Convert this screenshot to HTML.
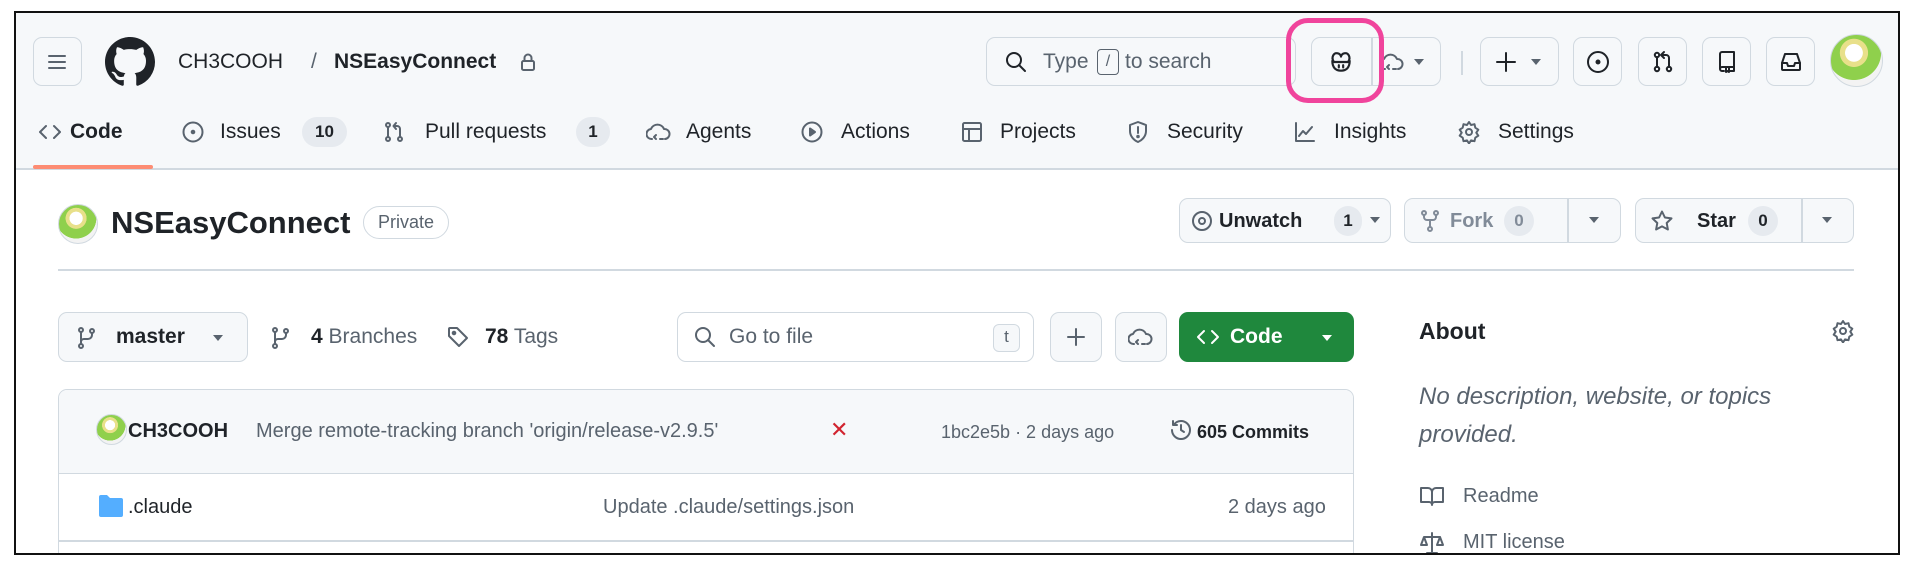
<!DOCTYPE html>
<html><head><meta charset="utf-8"><style>
*{box-sizing:border-box;margin:0;padding:0}
body{width:1918px;height:568px;background:#fff;font-family:"Liberation Sans",sans-serif;color:#1f2328;position:relative;overflow:hidden}
.frame{position:absolute;left:14px;top:11px;width:1886px;height:544px;border:2px solid #111;overflow:hidden;background:#fff}
.a{position:absolute}
.hdr{left:0;top:0;width:100%;height:157px;background:#f6f8fa;border-bottom:2px solid #d1d9e0}
.btn{position:absolute;border:1.5px solid #d1d9e0;border-radius:9px;background:#f6f8fa}
.t{position:absolute;font-size:21px;line-height:24px;white-space:nowrap}
svg{position:absolute;fill:none;stroke:#59636e;stroke-width:2;stroke-linecap:round;stroke-linejoin:round}
.cnt{position:absolute;background:#e6eaef;border-radius:16px;font-size:17px;line-height:30px;text-align:center;font-weight:bold}
.g{color:#59636e}
.av{background:radial-gradient(circle at 45% 35%,#fff 0 20%,#e8e08a 21% 32%,#8fd04c 33% 62%,#f3f3f3 63%)}
</style></head><body>
<div class="frame">
<div class="a hdr"></div>
<div class="btn" style="left:17px;top:24px;width:49px;height:49px"></div>
<svg style="left:30px;top:38px" width="22" height="22" viewBox="0 0 22 22"><path d="M3 5h16M3 11h16M3 17h16"/></svg>
<svg style="left:89px;top:24px;stroke:none;fill:#1f2328" width="50" height="50" viewBox="0 0 16 16"><path d="M8 0C3.58 0 0 3.58 0 8c0 3.54 2.29 6.530 5.47 7.59.4.07.55-.17.55-.38 0-.19-.01-.82-.01-1.49-2.01.37-2.53-.49-2.69-.94-.09-.23-.48-.94-.82-1.130-.28-.15-.68-.52-.01-.53.63-.01 1.08.58 1.23.82.72 1.21 1.87.87 2.33.66.07-.52.28-.87.51-1.07-1.78-.2-3.64-.89-3.64-3.95 0-.87.31-1.59.82-2.15-.08-.2-.36-1.02.08-2.12 0 0 .67-.21 2.2.82.64-.18 1.32-.27 2-.27.68 0 1.36.09 2 .27 1.53-1.04 2.2-.82 2.2-.82.44 1.1.16 1.92.08 2.12.51.56.82 1.27.82 2.15 0 3.07-1.87 3.75-3.65 3.95.29.25.54.73.54 1.48 0 1.07-.01 1.93-.01 2.2 0 .21.15.46.55.38A8.013 8.013 0 0016 8c0-4.42-3.58-8-8-8z"/></svg>
<div class="t" style="left:162px;top:37px">CH3COOH</div>
<div class="t g" style="left:295px;top:37px">/</div>
<div class="t" style="left:318px;top:37px;font-weight:bold">NSEasyConnect</div>
<svg style="left:503px;top:39px" width="18" height="20" viewBox="0 0 18 20"><rect x="3" y="9" width="12" height="9" rx="1.5"/><path d="M5.5 9V6a3.5 3.5 0 017 0v3"/></svg>
<div class="btn" style="left:970px;top:24px;width:310px;height:49px;background:#f6f8fa"></div>
<svg style="left:988px;top:37px;stroke:#1f2328" width="24" height="24" viewBox="0 0 24 24"><circle cx="10" cy="10" r="7"/><path d="M15 15l6 6"/></svg>
<div class="t g" style="left:1027px;top:37px">Type</div>
<div class="a" style="left:1081px;top:36px;width:22px;height:26px;border:1.5px solid #59636e;border-radius:4px;font-size:16px;text-align:center;line-height:23px;color:#59636e">/</div>
<div class="t g" style="left:1109px;top:37px">to search</div>
<div class="btn" style="left:1295px;top:24px;width:130px;height:49px"></div>
<div class="a" style="left:1355px;top:25px;width:1.5px;height:47px;background:#d1d9e0"></div>
<svg style="left:1312px;top:36px;stroke:#1f2328" width="26" height="26" viewBox="0 0 24 24"><path d="M5 11c-2-3 0-8 4-7 2 .5 3 2 3 3 0-1 1-2.5 3-3 4-1 6 4 4 7"/><path d="M4 11c0 6 3 9 8 9s8-3 8-9"/><path d="M5 12h14M10 15v2M14 15v2"/></svg>
<svg style="left:1363px;top:37px" width="26" height="24" viewBox="0 0 26 24"><path d="M6 19a5 5 0 01-1-10 7 7 0 0113 0 5 5 0 01 1 10"/><path d="M10 15l-2 2 2 2M14 19h3"/></svg>
<svg style="left:1397px;top:45px;stroke:none;fill:#59636e" width="12" height="8"><path d="M1 1h10L6 7z"/></svg>
<div class="a" style="left:1270px;top:5px;width:98px;height:85px;border:5px solid #f0449c;border-radius:22px"></div>
<div class="a" style="left:1445px;top:38px;width:1.5px;height:24px;background:#d1d9e0"></div>
<div class="btn" style="left:1464px;top:24px;width:79px;height:49px"></div>
<svg style="left:1478px;top:37px;stroke:#1f2328" width="24" height="24" viewBox="0 0 24 24"><path d="M12 3v18M3 12h18"/></svg>
<svg style="left:1514px;top:45px;stroke:none;fill:#59636e" width="12" height="8"><path d="M1 1h10L6 7z"/></svg>
<div class="btn" style="left:1557px;top:24px;width:49px;height:49px"></div>
<svg style="left:1569px;top:36px;stroke:#1f2328" width="26" height="26" viewBox="0 0 26 26"><circle cx="13" cy="13" r="10"/><circle cx="13" cy="13" r="1.5" fill="#1f2328"/></svg>
<div class="btn" style="left:1622px;top:24px;width:49px;height:49px"></div>
<svg style="left:1634px;top:36px;stroke:#1f2328" width="26" height="26" viewBox="0 0 26 26"><circle cx="7" cy="6" r="2.2"/><circle cx="7" cy="20" r="2.2"/><circle cx="19" cy="20" r="2.2"/><path d="M7 8v10M19 18V9a3 3 0 00-3-3h-4M14 3l-3 3 3 3"/></svg>
<div class="btn" style="left:1686px;top:24px;width:49px;height:49px"></div>
<svg style="left:1698px;top:36px;stroke:#1f2328" width="26" height="26" viewBox="0 0 26 26"><path d="M6 20V5a2 2 0 012-2h12v15H8a2 2 0 00-2 2 2 2 0 002 2h2M20 18v4h-4M12 19v4l1.5-1 1.5 1v-4"/></svg>
<div class="btn" style="left:1750px;top:24px;width:49px;height:49px"></div>
<svg style="left:1762px;top:36px;stroke:#1f2328" width="26" height="26" viewBox="0 0 26 26"><path d="M4 14l3-9h12l3 9v6a1 1 0 01-1 1H5a1 1 0 01-1-1z"/><path d="M4 14h5l1 3h6l1-3h5"/></svg>
<div class="a av" style="left:1814px;top:21px;width:53px;height:53px;border-radius:50%;border:1px solid #d1d9e0"></div>
<svg style="left:22px;top:107px" width="24" height="24" viewBox="0 0 24 24"><path d="M8 6l-6 6 6 6M16 6l6 6-6 6"/></svg>
<div class="t" style="left:54px;top:107px;font-weight:bold">Code</div>
<div class="a" style="left:17px;top:152px;width:120px;height:4px;background:#fd8c73;border-radius:2px"></div>
<svg style="left:165px;top:107px" width="24" height="24" viewBox="0 0 24 24"><circle cx="12" cy="12" r="9.5"/><circle cx="12" cy="12" r="1.3" fill="#59636e"/></svg>
<div class="t" style="left:204px;top:107px">Issues</div>
<div class="cnt" style="left:286px;top:104px;width:45px">10</div>
<svg style="left:366px;top:107px" width="24" height="24" viewBox="0 0 24 24"><circle cx="6" cy="5" r="2"/><circle cx="6" cy="19" r="2"/><circle cx="18" cy="19" r="2"/><path d="M6 7v10M18 17V9a3 3 0 00-3-3h-3M14 3l-2.5 3 2.5 3"/></svg>
<div class="t" style="left:409px;top:107px">Pull requests</div>
<div class="cnt" style="left:560px;top:104px;width:34px">1</div>
<svg style="left:630px;top:107px" width="26" height="24" viewBox="0 0 26 24"><path d="M6 19a5 5 0 01-1-10 7 7 0 0113 0 5 5 0 01 1 10"/><path d="M10 15l-2 2 2 2M14 19h3"/></svg>
<div class="t" style="left:670px;top:107px">Agents</div>
<svg style="left:784px;top:107px" width="24" height="24" viewBox="0 0 24 24"><circle cx="12" cy="12" r="9.5"/><path d="M10 8.5v7l5-3.5z" fill="#59636e"/></svg>
<div class="t" style="left:825px;top:107px">Actions</div>
<svg style="left:944px;top:107px" width="24" height="24" viewBox="0 0 24 24"><rect x="3" y="3" width="18" height="18" rx="1.5"/><path d="M3 9h18M9 9v12"/></svg>
<div class="t" style="left:984px;top:107px">Projects</div>
<svg style="left:1110px;top:107px" width="24" height="24" viewBox="0 0 24 24"><path d="M12 2l8 3v6c0 5-3.5 9-8 11-4.5-2-8-6-8-11V5z"/><path d="M12 7v6"/><circle cx="12" cy="16.5" r=".8" fill="#59636e"/></svg>
<div class="t" style="left:1151px;top:107px">Security</div>
<svg style="left:1277px;top:107px" width="24" height="24" viewBox="0 0 24 24"><path d="M3 3v18h18M6 16l4-5 3 3 6-7"/></svg>
<div class="t" style="left:1318px;top:107px">Insights</div>
<svg style="left:1441px;top:107px" width="24" height="24" viewBox="0 0 24 24"><circle cx="12" cy="12" r="3"/><path d="M12 2l2 3 3.5-.8.8 3.5 3 2-2 3 2 3-3 2-.8 3.5-3.5-.8-2 3-2-3-3.5.8-.8-3.5-3-2 2-3-2-3 3-2 .8-3.5 3.5.8z"/></svg>
<div class="t" style="left:1482px;top:107px">Settings</div>

<div class="a av" style="left:42px;top:191px;width:40px;height:40px;border-radius:50%;border:1px solid #d1d9e0"></div>
<div class="t" style="left:95px;top:193px;font-size:31px;line-height:34px;font-weight:bold">NSEasyConnect</div>
<div class="a" style="left:347px;top:193px;width:86px;height:33px;border:1.5px solid #d1d9e0;border-radius:17px;font-size:18px;line-height:30px;text-align:center;color:#59636e">Private</div>
<div class="btn" style="left:1163px;top:185px;width:212px;height:45px"></div>
<svg style="left:1175px;top:197px" width="22" height="22" viewBox="0 0 22 22"><circle cx="11" cy="11" r="9"/><circle cx="11" cy="11" r="3"/></svg>
<div class="t" style="left:1203px;top:196px;font-weight:bold;font-size:20px">Unwatch</div>
<div class="cnt" style="left:1318px;top:193px;width:28px">1</div>
<svg style="left:1353px;top:203px;stroke:none;fill:#59636e" width="12" height="8"><path d="M1 1h10L6 7z"/></svg>
<div class="btn" style="left:1388px;top:185px;width:217px;height:45px"></div>
<div class="a" style="left:1551px;top:186px;width:1.5px;height:43px;background:#d1d9e0"></div>
<svg style="left:1403px;top:196px;stroke:#818b98" width="22" height="24" viewBox="0 0 22 24"><circle cx="5" cy="4" r="2"/><circle cx="17" cy="4" r="2"/><circle cx="11" cy="20" r="2"/><path d="M5 6v2a3 3 0 003 3h6a3 3 0 003-3V6M11 11v7"/></svg>
<div class="t" style="left:1434px;top:196px;font-weight:bold;font-size:20px;color:#818b98">Fork</div>
<div class="cnt" style="left:1488px;top:193px;width:30px;color:#818b98">0</div>
<svg style="left:1572px;top:203px;stroke:none;fill:#59636e" width="12" height="8"><path d="M1 1h10L6 7z"/></svg>
<div class="btn" style="left:1619px;top:185px;width:219px;height:45px"></div>
<div class="a" style="left:1785px;top:186px;width:1.5px;height:43px;background:#d1d9e0"></div>
<svg style="left:1634px;top:196px" width="24" height="24" viewBox="0 0 24 24"><path d="M12 2.5l2.9 6 6.6.9-4.8 4.6 1.2 6.5L12 17.4l-5.9 3.1 1.2-6.5-4.8-4.6 6.6-.9z"/></svg>
<div class="t" style="left:1681px;top:196px;font-weight:bold;font-size:20px">Star</div>
<div class="cnt" style="left:1732px;top:193px;width:30px">0</div>
<svg style="left:1805px;top:203px;stroke:none;fill:#59636e" width="12" height="8"><path d="M1 1h10L6 7z"/></svg>
<div class="a" style="left:42px;top:256px;width:1796px;height:2px;background:#d1d9e0"></div>

<div class="btn" style="left:42px;top:299px;width:190px;height:50px"></div>
<svg style="left:61px;top:313px" width="20" height="24" viewBox="0 0 20 24"><circle cx="4" cy="4" r="2"/><circle cx="4" cy="20" r="2"/><circle cx="15" cy="5" r="2"/><path d="M4 6v12M15 7v2a4 4 0 01-4 4H7a3 3 0 00-3 3"/></svg>
<div class="t" style="left:100px;top:312px;font-weight:bold">master</div>
<svg style="left:196px;top:321px;stroke:none;fill:#59636e" width="12" height="8"><path d="M1 1h10L6 7z"/></svg>
<svg style="left:255px;top:313px" width="20" height="24" viewBox="0 0 20 24"><circle cx="4" cy="4" r="2"/><circle cx="4" cy="20" r="2"/><circle cx="15" cy="5" r="2"/><path d="M4 6v12M15 7v2a4 4 0 01-4 4H7a3 3 0 00-3 3"/></svg>
<div class="t" style="left:295px;top:312px"><b>4</b> <span class="g">Branches</span></div>
<svg style="left:430px;top:312px" width="24" height="24" viewBox="0 0 24 24"><path d="M3 4v7l10 10 8-8L11 3H4a1 1 0 00-1 1z"/><circle cx="8" cy="8" r="1.3" fill="#59636e"/></svg>
<div class="t" style="left:469px;top:312px"><b>78</b> <span class="g">Tags</span></div>
<div class="btn" style="left:661px;top:299px;width:357px;height:50px;background:#fff"></div>
<svg style="left:677px;top:312px" width="24" height="24" viewBox="0 0 24 24"><circle cx="10" cy="10" r="7"/><path d="M15 15l6 6"/></svg>
<div class="t g" style="left:713px;top:312px">Go to file</div>
<div class="a" style="left:977px;top:311px;width:27px;height:28px;border:1.5px solid #d1d9e0;border-radius:6px;background:#f6f8fa;font-size:17px;line-height:24px;text-align:center;color:#59636e">t</div>
<div class="btn" style="left:1034px;top:299px;width:52px;height:50px"></div>
<svg style="left:1048px;top:312px" width="24" height="24" viewBox="0 0 24 24"><path d="M12 4v16M4 12h16"/></svg>
<div class="btn" style="left:1099px;top:299px;width:52px;height:50px"></div>
<svg style="left:1112px;top:312px" width="26" height="24" viewBox="0 0 26 24"><path d="M6 19a5 5 0 01-1-10 7 7 0 0113 0 5 5 0 01 1 10"/><path d="M10 15l-2 2 2 2M14 19h3"/></svg>
<div class="a" style="left:1163px;top:299px;width:175px;height:50px;background:#1f883d;border-radius:9px"></div>
<svg style="left:1180px;top:312px;stroke:#fff" width="24" height="24" viewBox="0 0 24 24"><path d="M8 6l-6 6 6 6M16 6l6 6-6 6"/></svg>
<div class="t" style="left:1214px;top:312px;color:#fff;font-weight:bold">Code</div>
<svg style="left:1305px;top:321px;stroke:none;fill:#fff" width="12" height="8"><path d="M1 1h10L6 7z"/></svg>
<div class="a" style="left:42px;top:376px;width:1296px;height:200px;border:1.5px solid #d1d9e0;border-radius:9px;background:#fff;overflow:hidden">
 <div class="a" style="left:0;top:0;width:100%;height:84px;background:#f6f8fa;border-bottom:1.5px solid #d1d9e0"></div>
 <div class="a" style="left:0;top:150px;width:100%;height:1.5px;background:#d1d9e0"></div>
</div>
<div class="a av" style="left:80px;top:401px;width:31px;height:31px;border-radius:50%;border:1px solid #d1d9e0"></div>
<div class="t" style="left:112px;top:406px;font-size:20px;font-weight:bold">CH3COOH</div>
<div class="t g" style="left:240px;top:406px;font-size:20px">Merge remote-tracking branch 'origin/release-v2.9.5'</div>
<div class="t" style="left:814px;top:405px;color:#d1242f;font-size:22px">✕</div>
<div class="t g" style="left:925px;top:407px;font-size:18px">1bc2e5b · 2 days ago</div>
<svg style="left:1153px;top:405px" width="24" height="24" viewBox="0 0 24 24"><path d="M3 12a9 9 0 109-9 9 9 0 00-7 3.5M4 3v4h4M12 7v5l3 2"/></svg>
<div class="t" style="left:1181px;top:407px;font-size:18px;font-weight:bold">605 Commits</div>
<svg style="left:83px;top:482px;stroke:none;fill:#54aeff" width="24" height="22" viewBox="0 0 24 22"><path d="M0 2a2 2 0 012-2h6l3 3h11a2 2 0 012 2v15a2 2 0 01-2 2H2a2 2 0 01-2-2z"/></svg>
<div class="t" style="left:112px;top:482px;font-size:20px">.claude</div>
<div class="t g" style="left:587px;top:482px;font-size:20px">Update .claude/settings.json</div>
<div class="t g" style="left:1212px;top:482px;font-size:20px">2 days ago</div>
<div class="t" style="left:1403px;top:306px;font-size:23px;font-weight:bold">About</div>
<svg style="left:1815px;top:306px" width="24" height="24" viewBox="0 0 24 24"><circle cx="12" cy="12" r="3"/><path d="M12 2l2 3 3.5-.8.8 3.5 3 2-2 3 2 3-3 2-.8 3.5-3.5-.8-2 3-2-3-3.5.8-.8-3.5-3-2 2-3-2-3 3-2 .8-3.5 3.5.8z"/></svg>
<div class="t g" style="left:1403px;top:365px;font-size:24px;line-height:38px;font-style:italic">No description, website, or topics<br>provided.</div>
<svg style="left:1403px;top:471px" width="26" height="24" viewBox="0 0 26 24"><path d="M2 4h7a4 4 0 014 4v13a3 3 0 00-3-3H2zM24 4h-7a4 4 0 00-4 4v13a3 3 0 013-3h8z"/></svg>
<div class="t g" style="left:1447px;top:471px;font-size:20px">Readme</div>
<svg style="left:1403px;top:518px" width="26" height="24" viewBox="0 0 26 24"><path d="M13 2v20M5 6h16M8 22h10M5 6l-3 8h6zM21 6l-3 8h6z"/></svg>
<div class="t g" style="left:1447px;top:517px;font-size:20px">MIT license</div>
</div>
</body></html>
